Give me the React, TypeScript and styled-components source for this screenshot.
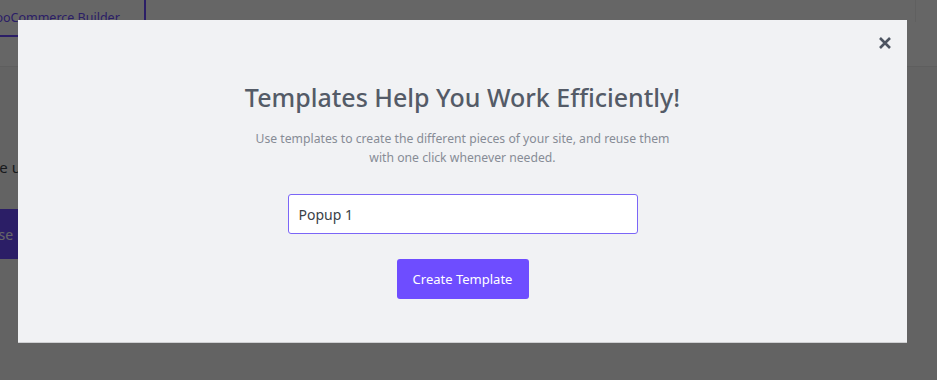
import React, { useState } from "react";
import styled, { createGlobalStyle } from "styled-components";

const GlobalStyle = createGlobalStyle`
    html, body {
        margin: 0;
        padding: 0;
        background: #f8f8f8;
        font-family: "Noto Sans", "Open Sans", sans-serif;
    }
    * {
        box-sizing: border-box;
    }
`;

const App: React.FC = () => {
    const [name, setName] = useState("Popup 1");

    return (
        <>
            <GlobalStyle />
            <Page>
                <Header>
                    <Tab>WooCommerce Builder</Tab>
                    <HeaderSpacer />
                    <HeaderSide />
                </Header>
                <Body>
                    <Intro>Save updates to your templates.</Intro>
                    <PrimaryButton>Choose Popup</PrimaryButton>
                </Body>
            </Page>
            <Overlay>
                <Modal>
                    <CloseButton aria-label="Close">
                        <svg width="14" height="14" viewBox="0 0 14 14">
                            <path
                                d="M2 2 L12 12 M12 2 L2 12"
                                stroke="#4d5461"
                                strokeWidth="2.6"
                            />
                        </svg>
                    </CloseButton>
                    <Title>Templates Help You Work Efficiently!</Title>
                    <Description>
                        Use templates to create the different pieces of your site, and reuse them
                        <br />
                        with one click whenever needed.
                    </Description>
                    <Form onSubmit={(e) => e.preventDefault()}>
                        <NameInput value={name} onChange={(e) => setName(e.target.value)} />
                        <SubmitButton type="submit">Create Template</SubmitButton>
                    </Form>
                </Modal>
            </Overlay>
        </>
    );
};

const Page = styled.div`
    min-height: 380px;
    overflow: hidden;
`;

const Header = styled.div`
    display: flex;
    height: 67px;
    background: #ffffff;
    border-bottom: 1px solid #ececec;
`;

const Tab = styled.div`
    display: flex;
    align-items: center;
    height: 37px;
    margin-left: -30px;
    padding: 0 24px 0 14px;
    font-size: 12.5px;
    color: #6c4dff;
    border-bottom: 2px solid #6c4dff;
    border-right: 2px solid #6c4dff;
`;

const HeaderSpacer = styled.div`
    flex: 1;
`;

const HeaderSide = styled.div`
    width: 22px;
    height: 22px;
    border-left: 1px solid #f0f0f0;
`;

const Body = styled.div`
    display: flex;
    flex-direction: column;
    align-items: flex-start;
    gap: 32px;
    padding-top: 90px;
`;

const Intro = styled.p`
    margin: 0 0 0 -25px;
    font-size: 15px;
    color: #3c434a;
    white-space: nowrap;
`;

const PrimaryButton = styled.button`
    height: 50px;
    margin-left: -66px;
    padding: 0 30px;
    border: none;
    background: #6c4dff;
    color: #ffffff;
    font-family: inherit;
    font-size: 14px;
`;

const Overlay = styled.div`
    position: fixed;
    inset: 0;
    background: rgba(0, 0, 0, 0.6);
    padding: 20px 30px 37px 18px;
    display: flex;
`;

const Modal = styled.div`
    position: relative;
    flex: 1;
    display: flex;
    flex-direction: column;
    align-items: center;
    padding-top: 62px;
    background: #f1f2f4;
    border-bottom: 1px solid #cfd0d2;
`;

const CloseButton = styled.button`
    position: absolute;
    top: 16px;
    right: 15px;
    display: flex;
    padding: 0;
    border: none;
    background: transparent;
    cursor: pointer;
`;

const Title = styled.h2`
    margin: 0;
    font-size: 25px;
    line-height: 30px;
    font-weight: 500;
    color: #545b67;
`;

const Description = styled.p`
    margin: 17px 0 0;
    font-size: 12.2px;
    line-height: 19px;
    color: #878c96;
    text-align: center;
`;

const Form = styled.form`
    display: flex;
    flex-direction: column;
    align-items: center;
    gap: 25px;
    margin-top: 27px;
`;

const NameInput = styled.input`
    width: 350px;
    height: 40px;
    padding: 0 10px;
    border: 1px solid #7b66f7;
    border-radius: 3px;
    background: #ffffff;
    font-family: inherit;
    font-size: 14px;
    color: #3a3f47;
    outline: none;
`;

const SubmitButton = styled.button`
    width: 132px;
    height: 40px;
    border: none;
    border-radius: 3px;
    background: #6e4dff;
    color: #ffffff;
    font-family: inherit;
    font-size: 13px;
    cursor: pointer;
`;

export default App;
